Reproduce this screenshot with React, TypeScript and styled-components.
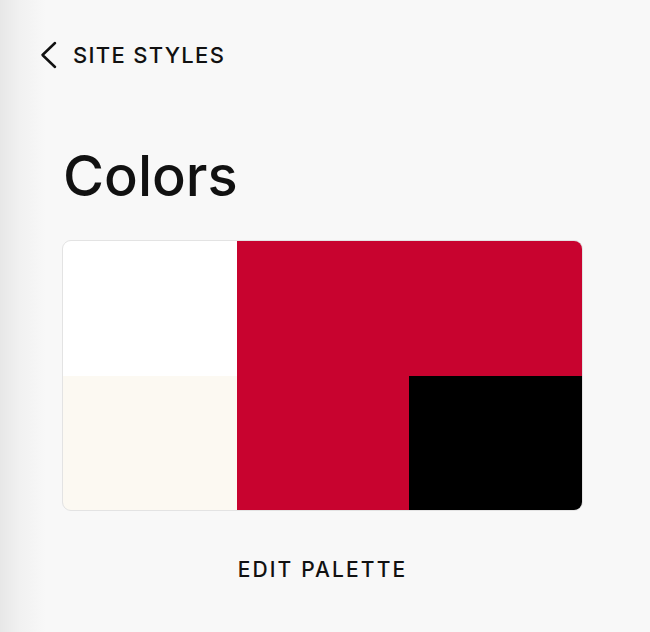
import React from 'react';
import styled, { createGlobalStyle } from 'styled-components';

const GlobalStyle = createGlobalStyle`
  html, body {
    margin: 0;
    padding: 0;
    background: #f8f8f8;
  }
  * {
    box-sizing: border-box;
  }
`;

type Swatch = {
  color: string;
  col: string;
  row: string;
};

const SWATCHES: Swatch[] = [
  { color: '#ffffff', col: '1', row: '1' },
  { color: '#c8032f', col: '2 / span 2', row: '1' },
  { color: '#fcf9f2', col: '1', row: '2' },
  { color: '#c8032f', col: '2', row: '2' },
  { color: '#000000', col: '3', row: '2' },
];

export default function App() {
  return (
    <Page>
      <GlobalStyle />
      <BackLink type="button">
        <svg width="19" height="28" viewBox="0 0 19 28" fill="none">
          <path d="M16 2 L3.5 14 L16 26" stroke="#111" strokeWidth="2.5" strokeLinecap="round" strokeLinejoin="round" />
        </svg>
        <BackLabel>SITE STYLES</BackLabel>
      </BackLink>

      <Content>
        <Title>Colors</Title>
        <Palette>
          {SWATCHES.map((s, i) => (
            <Cell key={i} $color={s.color} $col={s.col} $row={s.row} />
          ))}
        </Palette>
        <EditButton type="button">EDIT PALETTE</EditButton>
      </Content>
    </Page>
  );
}

const Page = styled.div`
  min-height: 632px;
  width: 650px;
  background: linear-gradient(to right, #e7e7e7 0px, #f1f1f1 20px, #f8f8f8 46px);
  font-family: Inter, 'Liberation Sans', sans-serif;
  color: #111;
  padding-top: 40px;
`;

const BackLink = styled.button`
  display: flex;
  align-items: center;
  gap: 15px;
  margin-left: 39px;
  padding: 0;
  border: none;
  background: none;
  cursor: pointer;
  font-family: inherit;
  color: inherit;
`;

const BackLabel = styled.span`
  font-size: 22px;
  font-weight: 500;
  letter-spacing: 1.3px;
  line-height: 30px;
`;

const Content = styled.div`
  display: flex;
  flex-direction: column;
  margin-left: 62px;
  width: 521px;
`;

const Title = styled.h1`
  margin: 74px 0 0 1px;
  font-size: 56px;
  font-weight: 500;
  line-height: 64px;
  letter-spacing: 0;
`;

const Palette = styled.div`
  margin-top: 32px;
  display: grid;
  grid-template-columns: 174px 172px 1fr;
  grid-template-rows: 135px 134px;
  border: 1.5px solid #e3e3e3;
  border-radius: 9px;
  overflow: hidden;
  background: #e3e3e3;
`;

const Cell = styled.div<{ $color: string; $col: string; $row: string }>`
  background: ${({ $color }) => $color};
  grid-column: ${({ $col }) => $col};
  grid-row: ${({ $row }) => $row};
`;

const EditButton = styled.button`
  align-self: center;
  margin-top: 45px;
  padding: 0;
  border: none;
  background: none;
  cursor: pointer;
  font-family: inherit;
  font-size: 21px;
  font-weight: 500;
  letter-spacing: 2.1px;
  line-height: 28px;
  color: #111;
`;
